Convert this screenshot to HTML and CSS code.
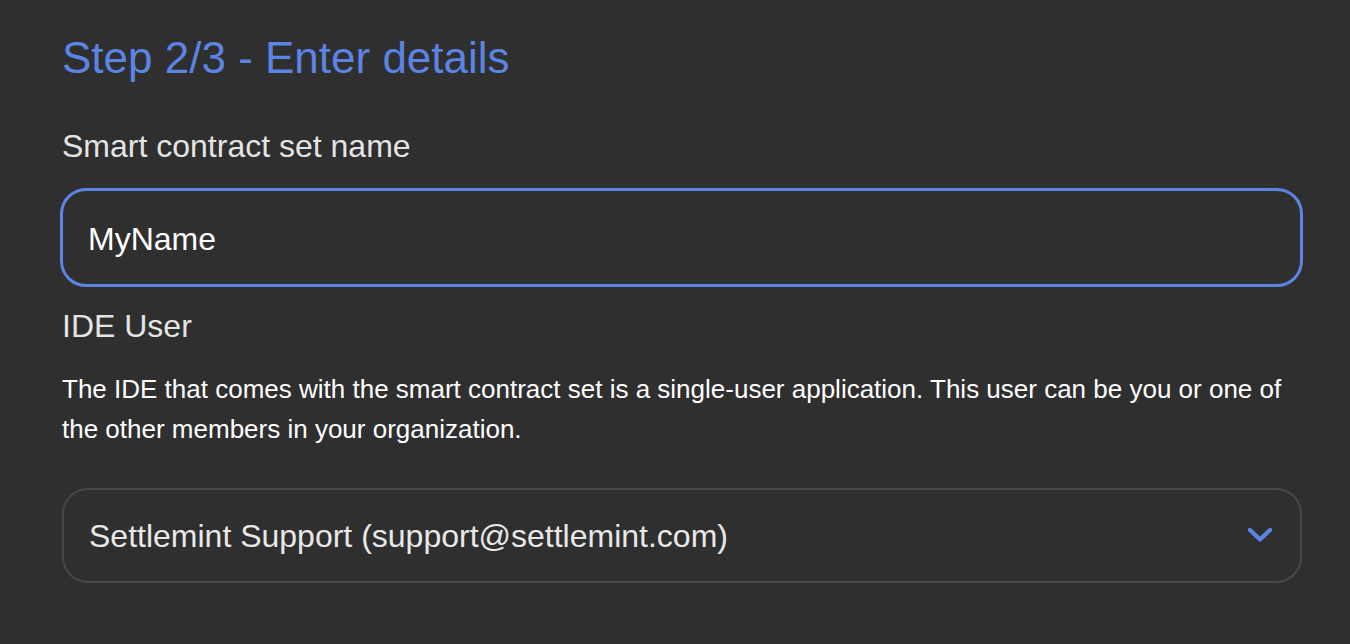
FILE: index.html
```html
<!DOCTYPE html>
<html lang="en">
<head>
<meta charset="utf-8">
<title>Step 2/3 - Enter details</title>
<link rel="stylesheet" href="styles.css">
</head>
<body>
<main class="form">
  <h1 class="title">Step 2/3 - Enter details</h1>
  <label class="label label-name" for="name">Smart contract set name</label>
  <div class="input" id="name">MyName</div>
  <div class="label label-user">IDE User</div>
  <p class="help">The IDE that comes with the smart contract set is a single-user application. This user can be you or one of the other members in your organization.</p>
  <div class="select">
    <span class="select-value">Settlemint Support (support@settlemint.com)</span>
    <svg class="chevron" width="26" height="16" viewBox="0 0 26 16" aria-hidden="true">
      <path d="M3 3 L13 12.5 L23 3" fill="none" stroke="#5b84e4" stroke-width="4.2" stroke-linecap="round" stroke-linejoin="round"/>
    </svg>
  </div>
</main>
</body>
</html>
```

FILE: styles.css
```css
html, body {
  margin: 0;
  padding: 0;
  background: #2f2f2f;
  height: 100%;
}

body {
  font-family: "Liberation Sans", Arial, Helvetica, sans-serif;
  color: #ffffff;
}

.form {
  display: flex;
  flex-direction: column;
  padding: 32px 48px 0 62px;
}

.title {
  margin: 0;
  font-size: 44px;
  line-height: 52px;
  font-weight: 400;
  color: #5b84e4;
}

.label {
  display: block;
  font-size: 32px;
  line-height: 40px;
  color: #e4e4e4;
}

.label-name {
  margin-top: 42px;
}

.input {
  box-sizing: border-box;
  margin: 22px -1px 0 -2px;
  height: 99px;
  border: 3px solid #5b84e4;
  border-radius: 26px;
  display: flex;
  align-items: center;
  padding: 2px 0 0 25px;
  font-size: 32px;
  line-height: 40px;
  color: #ffffff;
}

.label-user {
  margin-top: 19px;
}

.help {
  margin: 23px 0 0 0;
  font-size: 26px;
  line-height: 40px;
  color: #ffffff;
  max-width: 1230px;
}

.select {
  box-sizing: border-box;
  margin-top: 39px;
  height: 95px;
  border: 2px solid #484848;
  border-radius: 26px;
  display: flex;
  align-items: center;
  justify-content: space-between;
  padding: 0 27px 0 25px;
}

.select-value {
  font-size: 32px;
  line-height: 40px;
  color: #e8e8e8;
}

.chevron {
  display: block;
  margin-top: -2px;
}
```
